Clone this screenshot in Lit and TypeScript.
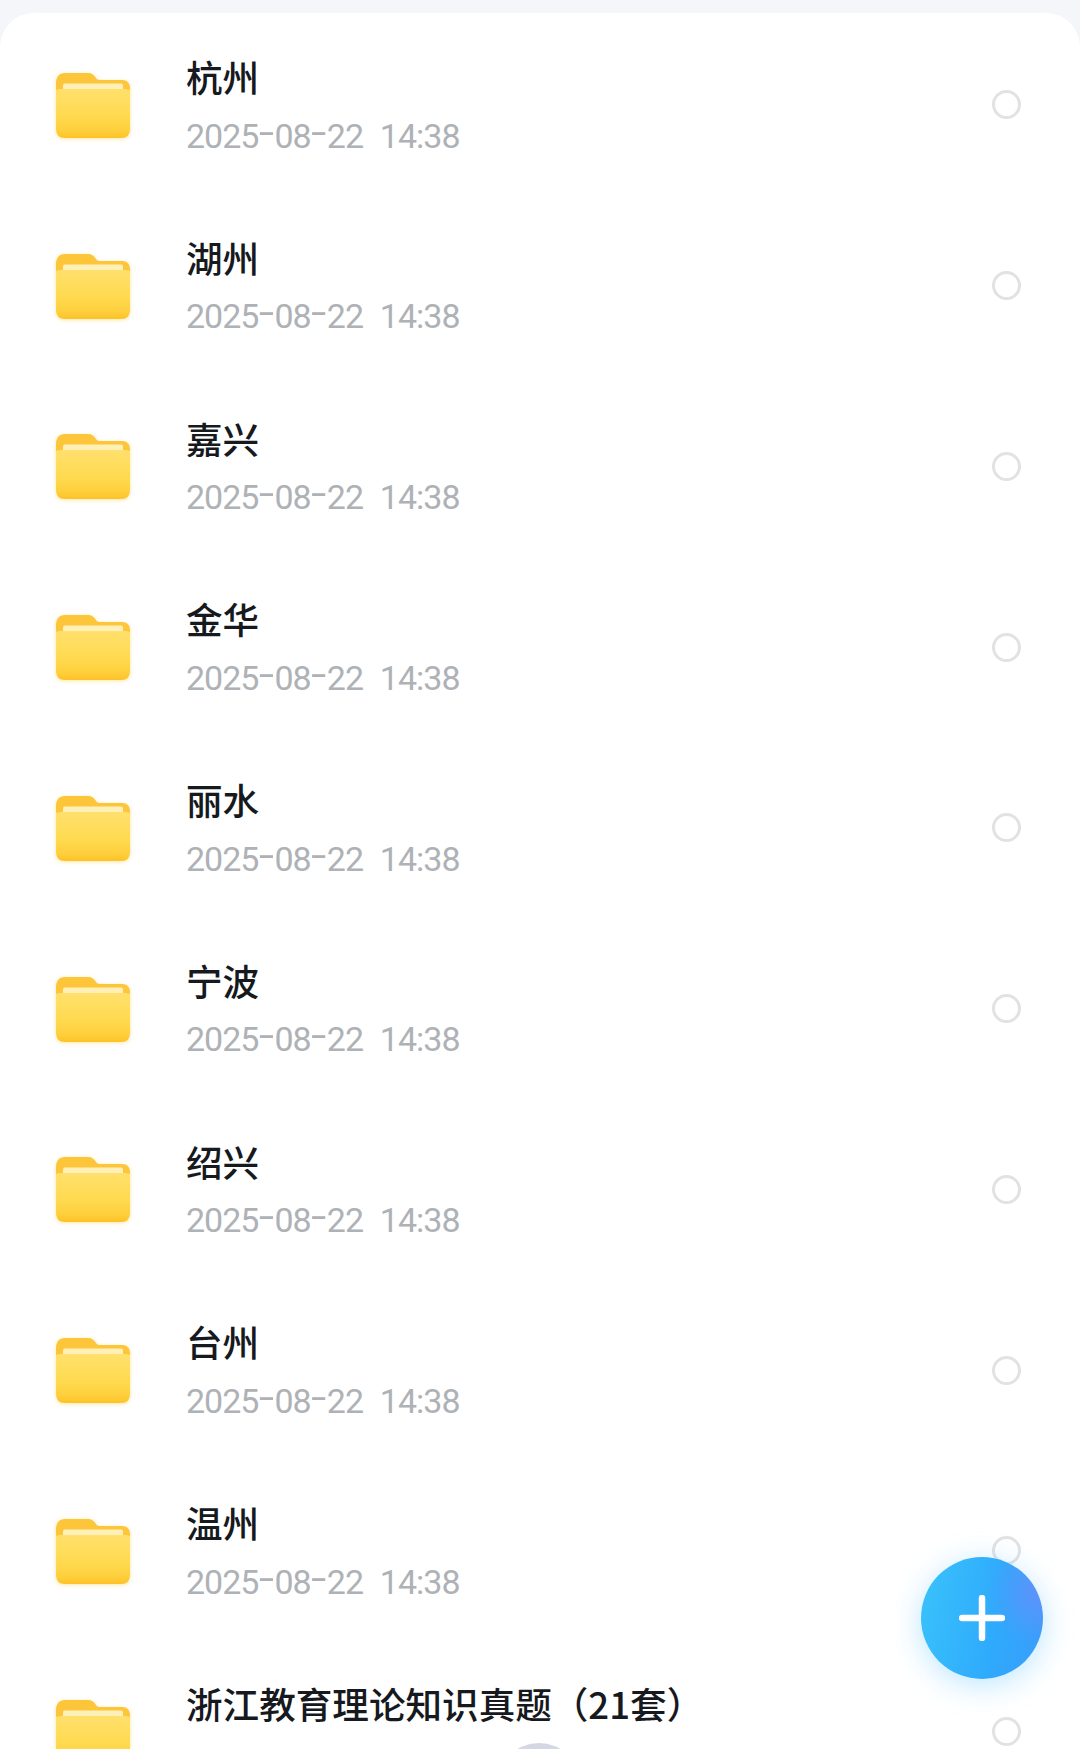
import { LitElement, html, css, svg } from "lit";
import { customElement } from "lit/decorators.js";

const NAMES = ["杭州", "湖州", "嘉兴", "金华", "丽水", "宁波", "绍兴", "台州", "温州", "浙江教育理论知识真题（21套）"];

const folder = (i: number) => svg`
<svg class="folder" viewBox="0 0 76 68" width="76" height="68" aria-hidden="true">
  <defs>
    <linearGradient id="front${i}" x1="0" y1="0" x2="0" y2="1">
      <stop offset="0" stop-color="#ffe06c"/>
      <stop offset="0.55" stop-color="#ffda50"/>
      <stop offset="0.85" stop-color="#fecf3c"/>
      <stop offset="1" stop-color="#fdc226"/>
    </linearGradient>
  </defs>
  <path d="M1 11C1 5 4 1 10 1H33C37 1 39 3 41 6C42 8 44 8 46 8H67C72 8 75 11 75 16V30H1Z" fill="#fdc63a"/>
  <rect x="8" y="11.5" width="60" height="8" rx="2" fill="#fff0b8"/>
  <path d="M1 18C3 17 5 17 8 17H68C71 17 73 17 75 18V56C75 63 72 66 66 66H10C4 66 1 63 1 56Z" fill="url(#front${i})"/>
</svg>`;

const dateText = html`2025<span class="dash">-</span>08<span class="dash">-</span>22  14:38`;

@customElement("app-root")
export class AppRoot extends LitElement {
  static styles = css`
    :host {
      display: block;
      position: relative;
      width: 1080px;
      height: 1749px;
      overflow: hidden;
      background: #f5f6fa;
      font-family: "Noto Sans CJK SC", "Noto Sans", sans-serif;
    }
    .sheet {
      margin-top: 13px;
      height: 1736px;
      box-sizing: border-box;
      background: #fff;
      border-radius: 34px 34px 0 0;
      overflow: hidden;
    }
    .row {
      display: flex;
      align-items: center;
      height: 180.75px;
      box-sizing: border-box;
      padding: 0 59px 0 55px;
    }
    .row:first-child { margin-top: 1px; }
    .folder {
      flex: none;
      margin-right: 55px;
      margin-top: 3px;
      filter: drop-shadow(0 1px 2px rgba(253, 200, 60, 0.45));
    }
    .info {
      flex: 1;
      min-width: 0;
      display: flex;
      flex-direction: column;
      gap: 21.5px;
      padding-bottom: 6px;
    }
    .name {
      font-size: 36.6px;
      line-height: 47px;
      font-weight: 500;
      color: #16191d;
      white-space: nowrap;
    }
    .date {
      font-family: "Roboto", "Noto Sans", sans-serif;
      font-size: 34px;
      line-height: 28px;
      height: 28px;
      letter-spacing: -1px;
      word-spacing: 1px;
      color: #aeb2b6;
      white-space: pre;
    }
    .dash {
      font-size: 56px;
      font-weight: 300;
      line-height: 0;
      letter-spacing: 0;
      vertical-align: -3px;
    }
    .radio {
      flex: none;
      width: 29px;
      height: 29px;
      margin-top: 1px;
      box-sizing: border-box;
      border: 3px solid #e2e2e2;
      border-radius: 50%;
    }
    .fab {
      position: absolute;
      left: 921px;
      top: 1557px;
      width: 122px;
      height: 122px;
      border-radius: 50%;
      background: radial-gradient(circle at 98% 28%, rgba(112, 140, 250, 0.7) 0%, rgba(112, 140, 250, 0) 36%),
        linear-gradient(100deg, #3ac3fb 0%, #2faafc 60%, #3a9cfb 100%);
      box-shadow: 0 6px 30px rgba(80, 190, 255, 0.38);
      display: flex;
      align-items: center;
      justify-content: center;
    }
    .handle {
      position: absolute;
      left: 497px;
      top: 1743px;
      width: 84px;
      height: 84px;
      border-radius: 50%;
      background: #d5d8e2;
    }
  `;

  render() {
    return html`
      <div class="sheet">
        ${NAMES.map(
          (n, i) => html`
            <div class="row">
              ${folder(i)}
              <div class="info">
                <div class="name">${n}</div>
                <div class="date">${i < NAMES.length - 1 ? dateText : ""}</div>
              </div>
              <div class="radio"></div>
            </div>
          `
        )}
      </div>
      <div class="handle"></div>
      <div class="fab">
        <svg viewBox="0 0 46 46" width="46" height="46" aria-hidden="true">
          <path d="M23 3V43M3 23H43" stroke="#fff" stroke-width="6.5" stroke-linecap="round" fill="none"/>
        </svg>
      </div>
    `;
  }
}
